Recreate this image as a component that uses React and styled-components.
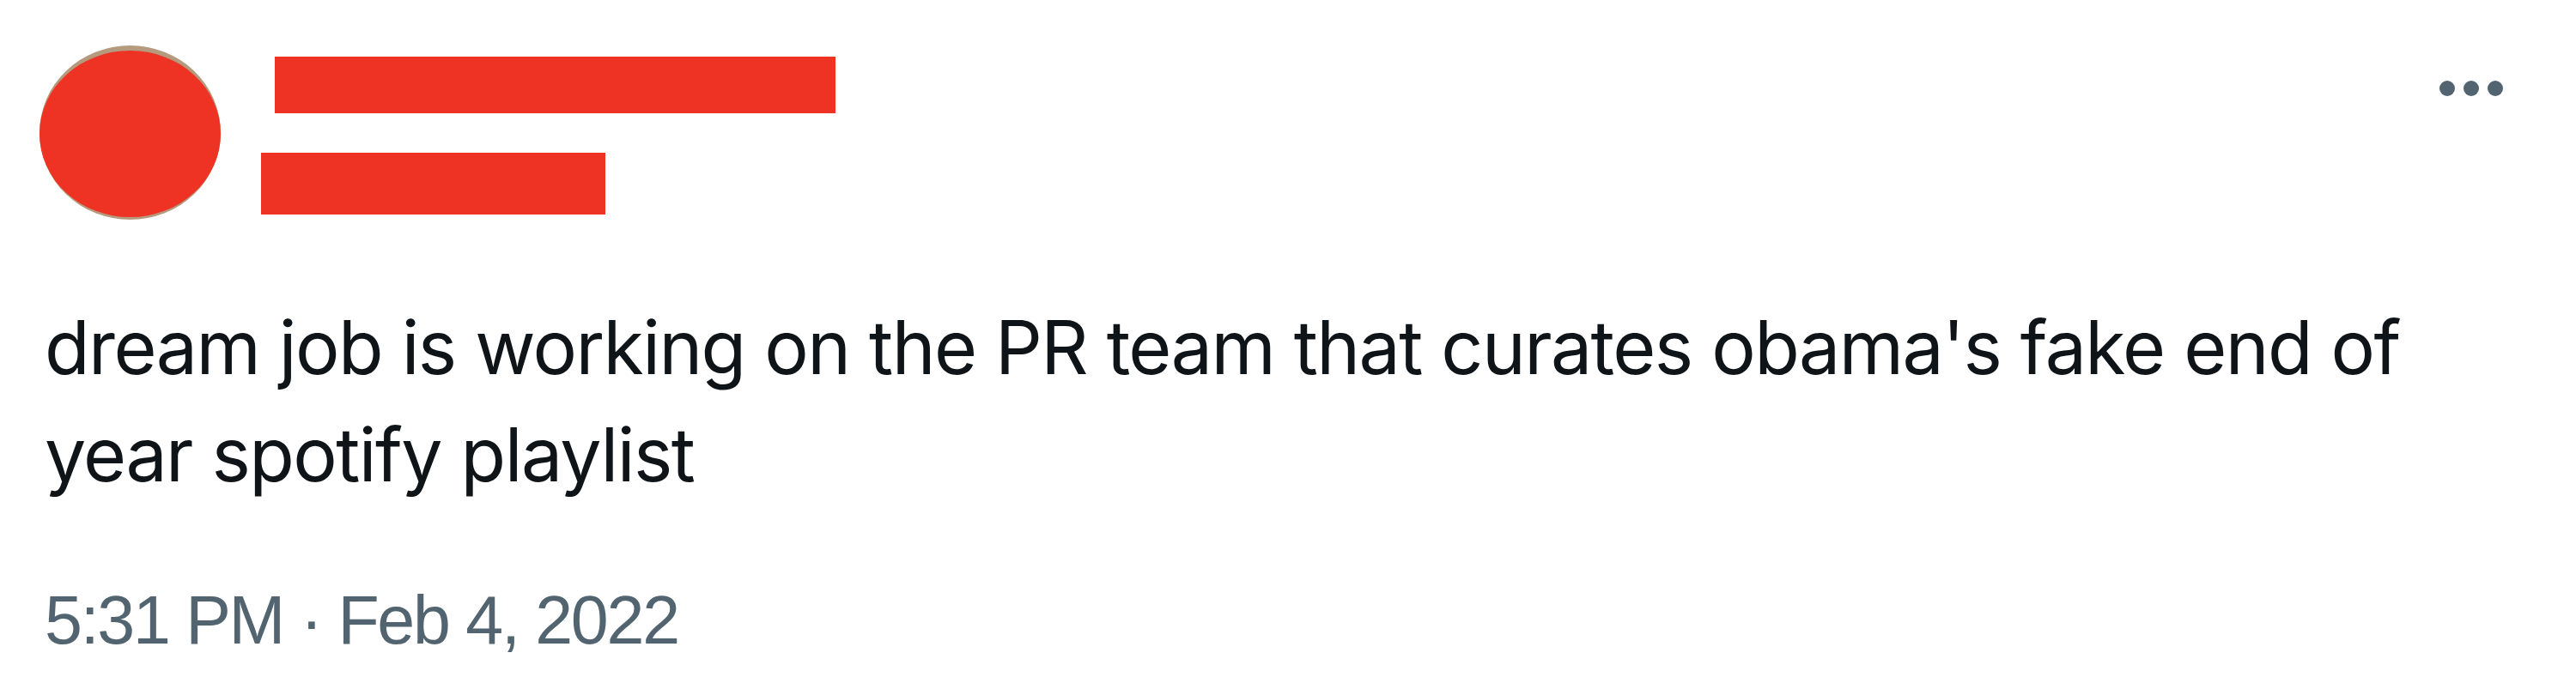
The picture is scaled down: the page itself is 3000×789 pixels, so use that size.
import React from 'react';
import styled, { createGlobalStyle } from 'styled-components';

const GlobalStyle = createGlobalStyle`
  html, body {
    margin: 0;
    padding: 0;
    background: #ffffff;
  }
`;

const Tweet = styled.article`
  width: 3000px;
  height: 789px;
  box-sizing: border-box;
  padding-left: 46px;
  background: #ffffff;
  overflow: hidden;
`;

const Header = styled.header`
  display: flex;
  align-items: flex-start;
`;

const Avatar = styled.div`
  width: 211px;
  height: 203px;
  margin-top: 53px;
  border-radius: 50%;
  background: #b59a7e;
  flex-shrink: 0;
`;

const AvatarCover = styled.div`
  width: 211px;
  height: 194px;
  margin-top: 6px;
  border-radius: 50%;
  background: #ee3324;
`;

const Names = styled.div`
  display: flex;
  flex-direction: column;
  align-items: flex-start;
  margin-left: 63px;
  padding-top: 66px;
`;

const Redaction = styled.div`
  width: ${p => p.w}px;
  height: ${p => p.h}px;
  margin-left: ${p => p.shift || 0}px;
  margin-top: ${p => p.gap || 0}px;
  background: #ee3324;
`;

const More = styled.button`
  display: flex;
  gap: 10px;
  margin: 94px 85px 0 auto;
  padding: 0;
  border: 0;
  background: none;
  cursor: pointer;
`;

const Dot = styled.span`
  width: 18px;
  height: 18px;
  border-radius: 50%;
  background: #536471;
`;

const Body = styled.p`
  max-width: 2820px;
  margin: 87px 0 0 6px;
  font-family: Inter, "Noto Sans", sans-serif;
  font-size: 86px;
  line-height: 125px;
  letter-spacing: -1.6px;
  color: #0f1419;
`;

const Stamp = styled.time`
  display: block;
  margin: 80px 0 0 6px;
  font-family: "Liberation Sans", Arial, sans-serif;
  font-size: 79px;
  line-height: 100px;
  letter-spacing: -2.3px;
  color: #536471;
`;

export default function App() {
  return (
    <>
      <GlobalStyle />
      <Tweet>
        <Header>
          <Avatar>
            <AvatarCover />
          </Avatar>
          <Names>
            <Redaction w={653} h={66} />
            <Redaction w={401} h={72} gap={46} shift={-16} />
          </Names>
          <More aria-label="More">
            <Dot />
            <Dot />
            <Dot />
          </More>
        </Header>
        <Body>
          dream job is working on the PR team that curates obama's fake end of year spotify playlist
        </Body>
        <Stamp>5:31 PM · Feb 4, 2022</Stamp>
      </Tweet>
    </>
  );
}
